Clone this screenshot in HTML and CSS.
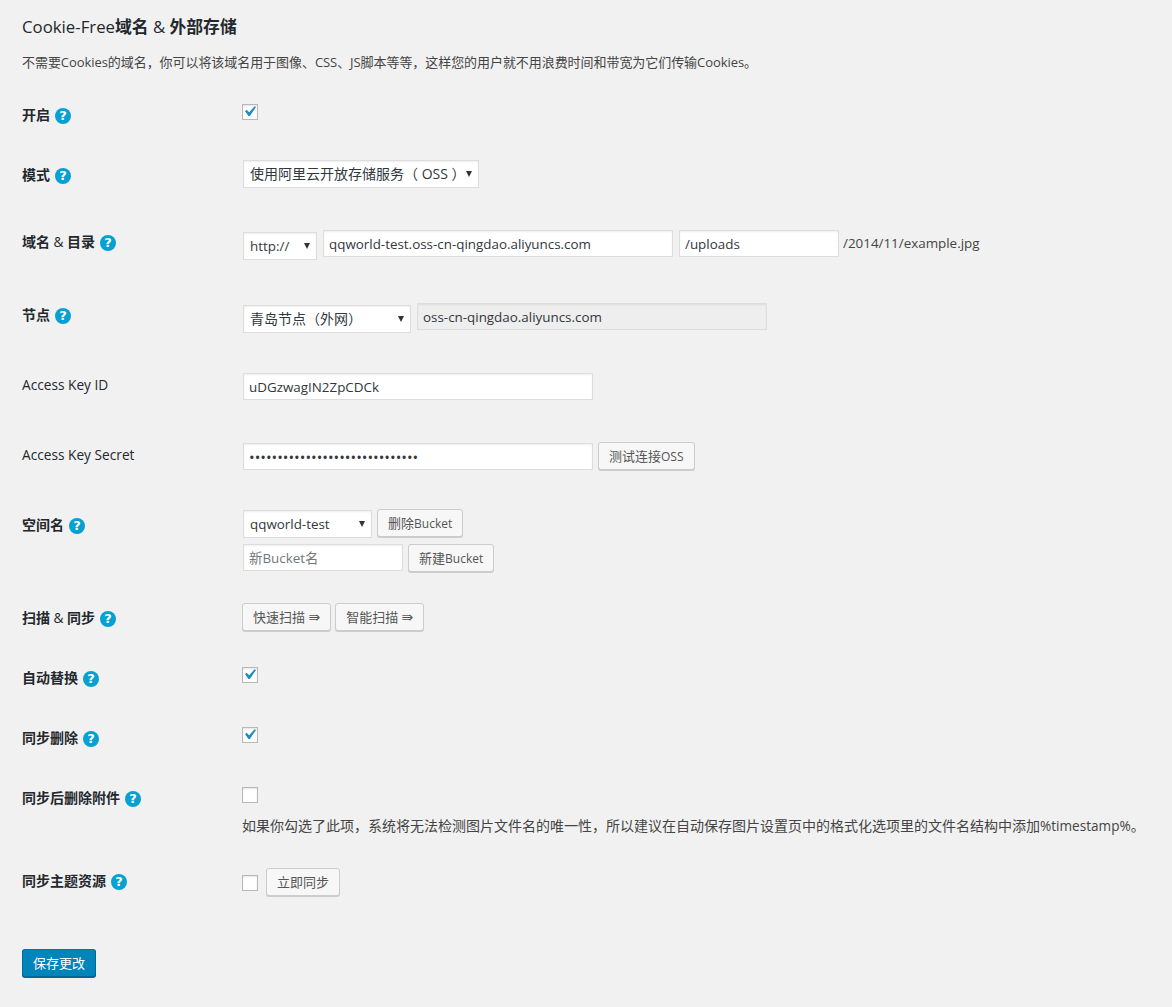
FILE: index.html
```html
<!DOCTYPE html>
<html lang="zh-CN">
<head>
<meta charset="utf-8">
<title>Cookie-Free域名 &amp; 外部存储</title>
<link rel="stylesheet" href="styles.css">
</head>
<body>
<main class="page">
  <h2 class="title">Cookie-Free<b>域名</b> &amp; <b>外部存储</b></h2>
  <p class="intro">不需要Cookies的域名，你可以将该域名用于图像、CSS、JS脚本等等，这样您的用户就不用浪费时间和带宽为它们传输Cookies。</p>

  <div class="row h60">
    <div class="label"><b>开启</b><span class="help">?</span></div>
    <div class="field top19"><span class="check"><svg class="tick" viewBox="0 0 20 20"><path d="M14.83 4.89l1.34.94-5.81 8.38H9.02L5.78 9.67l1.34-1.25 2.57 2.4z"/></svg></span></div>
  </div>
  <div class="row h67">
    <div class="label"><b>模式</b><span class="help">?</span></div>
    <div class="field top15">
      <span class="select w236 cjk"><select><option>使用阿里云开放存储服务（ OSS ）</option></select></span>
    </div>
  </div>
  <div class="row h73">
    <div class="label"><b>域名</b> &amp; <b>目录</b><span class="help">?</span></div>
    <div class="field top18 line">
      <span class="select w74 drop2"><select><option>http://</option></select></span>
      <input class="text w350" type="text" value="qqworld-test.oss-cn-qingdao.aliyuncs.com">
      <input class="text w160" type="text" value="/uploads">
      <span class="suffix">/2014/11/example.jpg</span>
    </div>
  </div>
  <div class="row h70">
    <div class="label"><b>节点</b><span class="help">?</span></div>
    <div class="field top18 line">
      <span class="select w168 drop2 cjk"><select><option>青岛节点（外网）</option></select></span>
      <input class="text w350 readonly" type="text" value="oss-cn-qingdao.aliyuncs.com" readonly>
    </div>
  </div>
  <div class="row h70">
    <div class="label">Access Key ID</div>
    <div class="field top18"><input class="text w350" type="text" value="uDGzwagIN2ZpCDCk"></div>
  </div>
  <div class="row h70">
    <div class="label">Access Key Secret</div>
    <div class="field top17 line gap5">
      <input class="text w350 drop1 secret" type="password" value="aaaaaaaaaaaaaaaaaaaaaaaaaaaaaa">
      <button class="btn" type="button">测试连接<span class="latin">OSS</span></button>
    </div>
  </div>
  <div class="row h93">
    <div class="label"><b>空间名</b><span class="help">?</span></div>
    <div class="field top14 stack">
      <div class="line">
        <span class="select w129 drop1"><select><option>qqworld-test</option></select></span>
        <button class="btn" type="button">删除<span class="latin">Bucket</span></button>
      </div>
      <div class="line">
        <input class="text w160" type="text" placeholder="新Bucket名">
        <button class="btn" type="button">新建<span class="latin">Bucket</span></button>
      </div>
    </div>
  </div>
  <div class="row h60">
    <div class="label"><b>扫描</b> &amp; <b>同步</b><span class="help">?</span></div>
    <div class="field top15 line tight">
      <button class="btn" type="button">快速扫描 <span class="arrow">⇛</span></button>
      <button class="btn" type="button">智能扫描 <span class="arrow">⇛</span></button>
    </div>
  </div>
  <div class="row h60">
    <div class="label"><b>自动替换</b><span class="help">?</span></div>
    <div class="field top19"><span class="check"><svg class="tick" viewBox="0 0 20 20"><path d="M14.83 4.89l1.34.94-5.81 8.38H9.02L5.78 9.67l1.34-1.25 2.57 2.4z"/></svg></span></div>
  </div>
  <div class="row h60">
    <div class="label"><b>同步删除</b><span class="help">?</span></div>
    <div class="field top19"><span class="check"><svg class="tick" viewBox="0 0 20 20"><path d="M14.83 4.89l1.34.94-5.81 8.38H9.02L5.78 9.67l1.34-1.25 2.57 2.4z"/></svg></span></div>
  </div>
  <div class="row h83">
    <div class="label"><b>同步后删除附件</b><span class="help">?</span></div>
    <div class="field top19">
      <span class="check"></span>
      <p class="note">如果你勾选了此项，系统将无法检测图片文件名的唯一性，所以建议在自动保存图片设置页中的格式化选项里的文件名结构中添加<span class="stamp">%timestamp%</span>。</p>
    </div>
  </div>
  <div class="row h98">
    <div class="label"><b>同步主题资源</b><span class="help">?</span></div>
    <div class="field top17 line">
      <span class="check"></span>
      <button class="btn" type="button">立即同步</button>
    </div>
  </div>
  <button class="btn primary" type="button">保存更改</button>
</main>
</body>
</html>
```

FILE: styles.css
```css
* { box-sizing: border-box; }
html, body { margin: 0; padding: 0; }
body {
  background: #f1f1f1;
  color: #444;
  font-family: "Open Sans", "Noto Sans CJK SC", sans-serif;
  font-size: 13px;
  line-height: 20px;
}
.page { width: 1172px; height: 1007px; padding: 17px 0 0 22px; overflow: hidden; }
input, select, button { font-family: inherit; font-size: 13px; }

.title { margin: 0; height: 20px; font-size: 16.8px; line-height: 20px; font-weight: 500; color: #23282d; }
.title b { font-size: 16.8px; font-weight: 700; }
.intro { margin: 15px 0 0; height: 20px; font-size: 13px; line-height: 20px; letter-spacing: -.06px; white-space: nowrap; }

.row { display: grid; grid-template-columns: 220px 1fr; }
.row:first-of-type { margin-top: 13px; }
.h60 { height: 60px; }
.h67 { height: 67px; }
.h70 { height: 70px; }
.h73 { height: 73px; }
.h83 { height: 83px; }
.h93 { height: 93px; }
.h98 { height: 98px; }

.label { padding-top: 20px; color: #23282d; font-size: 13.7px; line-height: 20px; white-space: nowrap; }
.label b { font-size: 14px; font-weight: 700; }

.help {
  display: inline-block;
  width: 16px;
  height: 16px;
  margin-left: 5px;
  border-radius: 50%;
  background: #07a0d3;
  color: #fff;
  font-family: "DejaVu Sans", sans-serif;
  font-size: 13px;
  font-weight: 700;
  line-height: 16px;
  text-align: center;
  vertical-align: 0;
}

.top14 { padding-top: 14px; }
.top15 { padding-top: 15px; }
.top17 { padding-top: 17px; }
.top18 { padding-top: 18px; }
.top19 { padding-top: 19px; }

.line { display: flex; align-items: flex-start; gap: 6px; }
.gap5 { gap: 5px; }
.tight { gap: 4px; }
.stack { display: flex; flex-direction: column; gap: 6px; }
.stack .line { gap: 5px; }

.text {
  display: block;
  height: 27px;
  margin: 0 0 0 1px;
  padding: 0 5px;
  border: 1px solid #ddd;
  border-radius: 0;
  outline: 0;
  background: #fff;
  box-shadow: inset 0 1px 2px rgba(0, 0, 0, .07);
  color: #32373c;
  font-size: 13.4px;
}
.text + .text { margin-left: 0; }
.select + .text { margin-left: 0; }
.text::placeholder { color: #72777c; opacity: 1; }
.readonly { background: #eee; }
.secret { font-size: 15px; }
.w350 { width: 350px; }
.w160 { width: 160px; }

.select { position: relative; display: block; height: 28px; margin-left: 1px; }
.select select {
  appearance: none;
  display: block;
  width: 100%;
  height: 28px;
  padding: 0 14px 0 6px;
  border: 1px solid #ddd;
  border-radius: 0;
  background: #fff;
  box-shadow: inset 0 1px 2px rgba(0, 0, 0, .07);
  color: #32373c;
  font-size: 13.4px;
}
.cjk select { font-size: 14px; padding-bottom: 2px; }
.select::after {
  content: "";
  position: absolute;
  top: 11px;
  right: 7px;
  border-top: 6px solid #333;
  border-left: 3px solid transparent;
  border-right: 3px solid transparent;
  pointer-events: none;
}
.w236 { width: 236px; }
.w74 { width: 74px; }
.w168 { width: 168px; }
.w129 { width: 129px; }
.drop2 { margin-top: 2px; }
.drop1 { margin-top: 1px; }

.suffix { margin-left: -2px; font-size: 13.4px; line-height: 27px; color: #444; }

.btn {
  display: block;
  height: 28px;
  margin: 0;
  padding: 0 10px;
  border: 1px solid #ccc;
  border-radius: 3px;
  background: #f7f7f7;
  box-shadow: 0 1px 0 #ccc;
  color: #555;
  font-size: 13px;
  line-height: 26px;
  white-space: nowrap;
}
.latin { font-size: 12px; }
.arrow { font-family: "DejaVu Sans", sans-serif; font-size: 14px; }
.primary {
  height: 28px;
  padding: 0 10px;
  border-color: #0073aa #006799 #006799;
  background: #0085ba;
  box-shadow: 0 1px 0 #006799;
  color: #fff;
}

.check {
  position: relative;
  display: block;
  flex: none;
  width: 16px;
  height: 16px;
  border: 1px solid #b4b9be;
  background: #fff;
  box-shadow: inset 0 1px 2px rgba(0, 0, 0, .1);
}
.top17 .check { margin-top: 7px; margin-right: 2px; }
.tick { position: absolute; left: -4px; top: -4px; width: 21px; height: 21px; fill: #1e8cbe; }
.note { margin: 13px 0 0; font-size: 14px; line-height: 20px; white-space: nowrap; }
.stamp { font-size: 13.6px; font-weight: 500; }
```
